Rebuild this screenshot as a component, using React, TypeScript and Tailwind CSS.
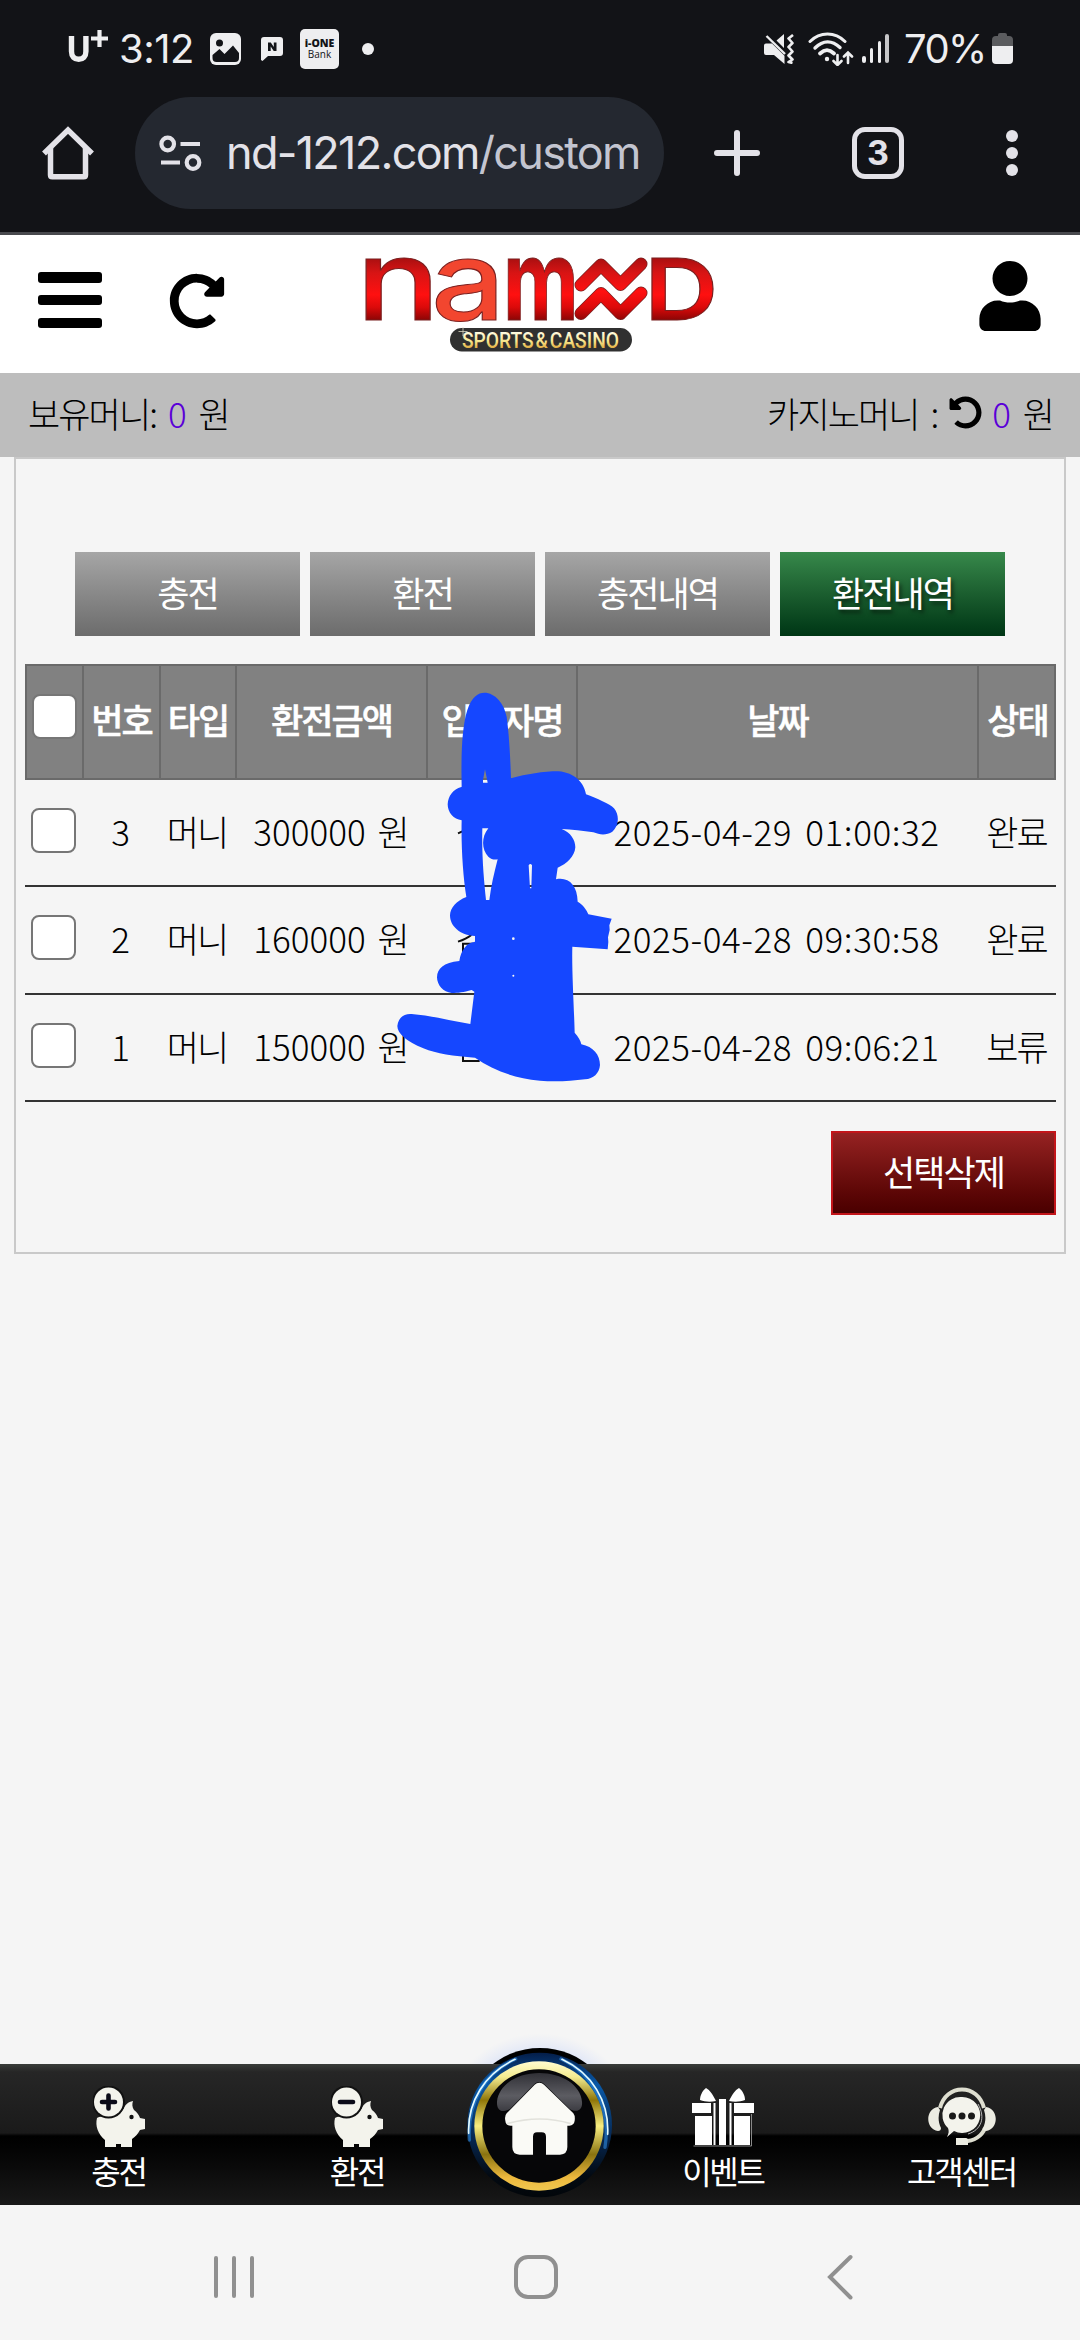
import React from "react";
import { FaRedoAlt, FaUndoAlt, FaUser } from "react-icons/fa";

const tabs = [
  { label: "충전", active: false },
  { label: "환전", active: false },
  { label: "충전내역", active: false },
  { label: "환전내역", active: true },
];

const headers = ["번호", "타입", "환전금액", "입금자명", "날짜", "상태"];

const rows = [
  { no: "3", type: "머니", amount: "300000", date: "2025-04-29 01:00:32", state: "완료", h: "h-[107px]" },
  { no: "2", type: "머니", amount: "160000", date: "2025-04-28 09:30:58", state: "완료", h: "h-[108px]" },
  { no: "1", type: "머니", amount: "150000", date: "2025-04-28 09:06:21", state: "보류", h: "h-[107px]" },
];

const gridCols = "grid grid-cols-[57px_77px_76px_191px_150px_401px_79px]";

function Ko({ children }: { children: React.ReactNode }) {
  return <span className="tracking-[-1.9px] [word-spacing:6px]">{children}</span>;
}

function StatusBar() {
  return (
    <div className="flex h-[97px] items-center pl-[68px] text-[#eeeef0] font-['Inter',sans-serif]">
      <div className="relative h-[34px] w-[51px]">
        <svg width="44" height="36" viewBox="0 0 44 36" className="absolute -top-1 left-0" fill="none" stroke="#eeeef0">
          <path d="M3.500 8v15.500c0 5 3 7.800 7.200 7.800s7.200-2.800 7.200-7.800V8" strokeWidth="5.400" />
          <path d="M31.500 2v17M23 10.500h17" strokeWidth="4.200" />
        </svg>
      </div>
      <span className="w-[91px] text-[40px] leading-none tracking-[-0.5px]">3:12</span>
      <svg width="31" height="32" viewBox="0 0 31 32">
        <rect width="31" height="32" rx="6" fill="#eeeef0" />
        <circle cx="9.500" cy="10" r="3.500" fill="#121317" />
        <path d="M2.500 22l7-6 5 5 8.500-8.500L29 20v5a4 4 0 0 1-4 4H6.500a4 4 0 0 1-4-4z" fill="#121317" />
      </svg>
      <div className="relative ml-5 flex h-[24px] w-[22px]">
        <svg width="22" height="24" viewBox="0 0 22 24">
          <path d="M3 0h16a3 3 0 0 1 3 3v13a3 3 0 0 1-3 3H7l-5.500 5L0 23V3a3 3 0 0 1 3-3z" fill="#eeeef0" />
          <path d="M7 14V5.500h2.800l3 4.500V5.500h2.700V14h-2.800l-3-4.500V14z" fill="#121317" />
        </svg>
      </div>
      <div className="ml-[17px] flex h-10 w-[39px] flex-col items-center justify-center rounded-[5px] bg-[#eeeef0] font-['Open_Sans',sans-serif] text-[#121317]">
        <span className="text-[10.500px] font-extrabold leading-[11px]">i-ONE</span>
        <span className="text-[10px] font-medium leading-[11px]">Bank</span>
      </div>
      <div className="ml-[23px] h-3 w-3 rounded-full bg-[#eeeef0]" />
      <div className="ml-auto flex items-center pr-[67px]">
        <svg width="30" height="30" viewBox="0 0 30 30">
          <path d="M0 11.500Q0 9.500 2 9.500h6L20 29.500 10 21H2q-2 0-2-2z M20 0v14L12.500 6.500z M8 9.500l12.500 12.200V30L10 21z" fill="#eeeef0" />
          <path d="M2.500 2l18.500 18" stroke="#eeeef0" strokeWidth="2.400" />
          <path d="M29 1l-4.500 3.500L28.500 9l-4 4 4 4.500-4 4 4 4-4 2.500 4 1" stroke="#eeeef0" strokeWidth="2.600" fill="none" strokeLinejoin="round" />
        </svg>
        <svg width="46" height="34" viewBox="0 0 46 34" className="ml-[14px]" fill="none" stroke="#eeeef0" strokeLinecap="round">
          <path d="M2 9.500C12-.5 27-.5 37 9.500" strokeWidth="3" />
          <path d="M7 16C15 8 24 8 32 15.500" strokeWidth="3.400" />
          <path d="M12 21.500c5-4.500 9-4.500 14 0" strokeWidth="3.800" />
          <circle cx="19" cy="27" r="2.200" fill="#eeeef0" stroke="none" />
          <path d="M29.500 23v9.500M25.500 29l4 4 4-4M40 31V20.500M36 24.500l4-4 4 4" strokeWidth="2.600" />
        </svg>
        <div className="ml-2 flex h-[29px] w-[27px] items-end justify-between">
          <i className="h-[7px] w-[3.500px] rounded-full bg-[#eeeef0]" />
          <i className="h-[15px] w-[3.500px] rounded-full bg-[#eeeef0]" />
          <i className="h-[22px] w-[3.500px] rounded-full bg-[#eeeef0]" />
          <i className="h-[29px] w-[3.500px] rounded-full bg-[#c6c6c8]" />
        </div>
        <span className="ml-[15px] w-[88px] whitespace-nowrap text-[40px] leading-none tracking-[-1.600px]">70%</span>
        <svg width="21" height="31" viewBox="0 0 21 31">
          <path d="M6 3V2a2 2 0 0 1 2-2h5a2 2 0 0 1 2 2v1h2a4 4 0 0 1 4 4v6H0V7a4 4 0 0 1 4-4z" fill="#5b5c5f" />
          <path d="M0 13h21v14a4 4 0 0 1-4 4H4a4 4 0 0 1-4-4z" fill="#eeeef0" />
        </svg>
      </div>
    </div>
  );
}

function BrowserBar() {
  return (
    <div className="flex h-[135px] items-start pl-[42px]">
      <svg width="52" height="54" viewBox="0 0 52 54" className="mt-[29px]" fill="none" stroke="#e3e2e8" strokeWidth="5.500">
        <path d="M2 27.500L26 4l24 23.500" />
        <path d="M8.500 22v27q0 1.800 1.800 1.800h31.400q1.800 0 1.800-1.800V22" />
      </svg>
      <div className="ml-[41px] flex h-28 w-[529px] items-center rounded-full bg-[#242830] pl-6">
        <svg width="43" height="37" viewBox="0 0 43 37" fill="none" stroke="#e3e2e8" strokeWidth="4.200">
          <circle cx="8.700" cy="9" r="6.300" />
          <path d="M21.500 9H41M2 27.500h19" />
          <circle cx="34" cy="27.500" r="6.300" />
        </svg>
        <span className="ml-[24px] whitespace-nowrap font-['Inter',sans-serif] text-[45px] leading-[56px] tracking-[-1.700px] text-[#e3e2e8]">
          nd-1212.com<span className="text-[#c3c5d0]">/custom</span>
        </span>
      </div>
      <svg width="46" height="46" viewBox="0 0 46 46" className="ml-[50px] mt-[33px]" stroke="#e3e2e8" strokeWidth="6" strokeLinecap="round">
        <path d="M23 3v40M3 23h40" />
      </svg>
      <div className="ml-[92px] mt-[30px] flex h-[52px] w-[52px] items-center justify-center rounded-[13px] border-[5.500px] border-[#e3e2e8] font-['Inter',sans-serif] text-[34px] font-bold leading-none text-[#e3e2e8]">
        3
      </div>
      <div className="ml-[102px] mt-[33px] flex h-[46px] flex-col justify-between">
        <i className="h-3 w-3 rounded-full bg-[#e3e2e8]" />
        <i className="h-3 w-3 rounded-full bg-[#e3e2e8]" />
        <i className="h-3 w-3 rounded-full bg-[#e3e2e8]" />
      </div>
    </div>
  );
}

function Logo() {
  return (
    <svg width="370" height="120" viewBox="0 0 370 120" className="mx-auto overflow-visible">
      <defs>
        <linearGradient id="red" x1="0" y1="12" x2="0" y2="75" gradientUnits="userSpaceOnUse">
          <stop offset="0" stopColor="#a80f10" />
          <stop offset="0.250" stopColor="#d81414" />
          <stop offset="0.550" stopColor="#ff1010" />
          <stop offset="0.800" stopColor="#dc0a0a" />
          <stop offset="1" stopColor="#8f0505" />
        </linearGradient>
        <linearGradient id="redLetter" x1="0" y1="-62" x2="0" y2="0" gradientUnits="userSpaceOnUse">
          <stop offset="0" stopColor="#a80f10" />
          <stop offset="0.250" stopColor="#d81414" />
          <stop offset="0.600" stopColor="#ff1010" />
          <stop offset="0.800" stopColor="#dc0a0a" />
          <stop offset="1" stopColor="#8f0505" />
        </linearGradient>
        <linearGradient id="gold" x1="0" y1="0" x2="0" y2="1">
          <stop offset="0.200" stopColor="#fffbe0" />
          <stop offset="0.550" stopColor="#f7e68c" />
          <stop offset="0.850" stopColor="#e0a83a" />
        </linearGradient>
      </defs>
      <g fontFamily="Inter, sans-serif" fontWeight="500" stroke="#7a2020" strokeWidth="1">
        <text transform="translate(1 74.500) scale(1.250 1)" fontSize="112" fill="url(#redLetter)">n</text>
        <text transform="translate(76 74.500) scale(1.190 1)" fontSize="110" fill="#f2462f">a</text>
        <text transform="translate(148 74.500) scale(0.740 1)" fontSize="112" fontWeight="700" fill="url(#redLetter)">m</text>
        <text transform="translate(289.500 74.500) scale(1.200 1)" fontSize="85" fontWeight="600" fill="url(#redLetter)">D</text>
      </g>
      <g fill="none" strokeLinecap="round" strokeLinejoin="round">
        <path d="M226 40l20-20 19.500 19.500L286 19M226 68.500l20-20 19.500 20L286 48" stroke="#7a2020" strokeWidth="13" />
        <path d="M226 40l20-20 19.500 19.500L286 19M226 68.500l20-20 19.500 20L286 48" stroke="url(#red)" strokeWidth="11.500" />
      </g>
      <rect x="95" y="83" width="182" height="23.500" rx="11.700" fill="#303030" />
      <text x="107" y="102.500" fontFamily="Roboto, sans-serif" fontWeight="500" fontSize="21.500" textLength="157" lengthAdjust="spacingAndGlyphs" fill="url(#gold)">
        SPORTS&#8202;&amp;&#8202;CASINO
      </text>
      <path d="M108 82v9M103.500 86.500h9" stroke="#d8d4c0" strokeWidth="0.800" />
    </svg>
  );
}

function SiteHeader() {
  return (
    <header className="relative flex h-[138px] items-start bg-white">
      <div className="ml-[38px] mt-[37px] flex h-14 w-[64px] flex-col justify-between">
        <i className="h-[10.500px] rounded-[3px] bg-black" />
        <i className="h-[10.500px] rounded-[3px] bg-black" />
        <i className="h-[10.500px] rounded-[3px] bg-black" />
      </div>
      <FaRedoAlt size={56} className="ml-[67px] mt-[38px] text-black" />
      <div className="ml-[130px] mt-[10px]">
        <Logo />
      </div>
      <FaUser className="ml-auto mr-[39px] mt-[26px] h-[70px] w-[62px] text-black" />
    </header>
  );
}

function Balance() {
  return (
    <div className="flex h-[84px] items-center justify-between bg-[#bdbdbd] pb-[6px] pl-[28px] pr-[27px] text-[35px] font-light leading-none text-black">
      <div className="flex whitespace-pre">
        <Ko>보유머니: </Ko>
        <span className="text-[#5a00d8]">0</span>
        <Ko> 원</Ko>
      </div>
      <div className="flex items-center whitespace-pre">
        <Ko>카지노머니 : </Ko>
        <FaUndoAlt size={33} className="mr-[10px]" />
        <span className="text-[#5a00d8]">0</span>
        <Ko> 원</Ko>
      </div>
    </div>
  );
}

function Checkbox() {
  return <span className="h-[45px] w-[45px] rounded-[8px] border-[2.500px] border-[#767676] bg-white" />;
}

function Scribble() {
  return (
    <svg width="300" height="440" viewBox="0 0 900 1320" className="absolute left-[355px] top-[-4px]">
      <path d="M234 520l18-8M303 505v55M234 845q25-8 40-20M249 885v-34h30M388 842l14 6M249 1175v28h50" stroke="#111" strokeWidth="6" fill="none" />
      <path
        fill="#1547ff"
        fillRule="evenodd"
        d="M245 380C243 280 246 200 262 150 275 110 295 98 313 98c32 0 59 32 67 72 8 60 11 130 13 185 47-13 97-21 142-21 50 4 78 36 83 69 32 12 72 29 84 42 20 25 11 55-5 70-17 11-37 10-57 2-30-5-65-9-95-10 27 10 41 33 41 55-2 28-26 50-53 61l-5 35c37-8 64 17 65 67 17 10 27 25 32 38l70 13-7 20 1 14-5 22 1 14-2 22-106-8c-2 70 5 180 7 258 11 12 18 24 20 35 36 7 56 32 56 62-2 25-20 42-45 43-45 6-95 8-135 4-80-7-140-32-195-69-65-5-115-11-155-28-50-20-78-45-78-67 3-28 23-38 43-36 55 4 115 20 176 30l12-97-8-5c-25 7-40 9-60 9-25-2-44-24-44-47 1-27 19-44 67-49 5-31 20-55 47-58v-17c-46-2-75-30-75-62 1-23 19-43 49-55-10-63-16-153-14-230-24-3-42-23-42-48 1-25 16-45 41-52zM315 328l-6 32 0 8h14l-2-10zM307 505c-2 85 5 155 11 215h10c5-40 14-80 25-122-10 2-20 0-28-8-20-20-22-58 0-85zM446 616l4 69h4l2-69q-5-8-10 0zM396 836a4 4 0 1 0 8 0 4 4 0 1 0-8 0zM397 947a3 3 0 1 0 6 0 3 3 0 1 0-6 0z"
      />
    </svg>
  );
}

function HistoryTable() {
  return (
    <div className="relative ml-[9px] mt-7 w-[1031px] text-[35px] leading-none">
      <div
        className={
          gridCols +
          " h-[116px] border-y-2 border-r-2 border-[#6a6a6a] bg-[#818181] font-medium text-white [-webkit-text-stroke:0.5px_white]"
        }
      >
        <div className="flex items-center justify-center border-l-2 border-[#6a6a6a] pb-3">
          <Checkbox />
        </div>
        {headers.map((h) => (
          <div key={h} className="flex items-center justify-center border-l-2 border-[#6a6a6a] pb-2 whitespace-nowrap">
            <Ko>{h}</Ko>
          </div>
        ))}
      </div>
      {rows.map((r) => (
        <div
          key={r.no}
          className={
            gridCols + " items-center justify-items-center border-b-2 border-[#333] pb-[5px] font-light text-black whitespace-nowrap " + r.h
          }
        >
          <Checkbox />
          <span>{r.no}</span>
          <Ko>{r.type}</Ko>
          <span>
            {r.amount}
            <Ko> 원</Ko>
          </span>
          <span />
          <span className="tracking-[0.550px] [word-spacing:5px]">{r.date}</span>
          <Ko>{r.state}</Ko>
        </div>
      ))}
      <Scribble />
    </div>
  );
}

function Pig({ minus = false }: { minus?: boolean }) {
  return (
    <svg width="52" height="62" viewBox="0 0 52 62">
      <path
        d="M4 32C12 28 26 32 31 22c1-3 4-6 9-7-1 3-1 6 1 9 3 2 5 5 6 8l5 1v10l-5 1c-2 4-5 7-8 9v8H28v-3h-5v3H12v-7C5 48 2 40 4 32z"
        fill="#f3f3ec"
      />
      <circle cx="15.500" cy="16" r="16.500" fill="#111" />
      <circle cx="15.500" cy="16" r="14.500" fill="#f3f3ec" />
      <path d={minus ? "M9 16h13" : "M9 16h13M15.500 9.500v13"} stroke="#0a0a18" strokeWidth="4.600" strokeLinecap="round" />
      <circle cx="38.500" cy="31" r="2.200" fill="#111" />
    </svg>
  );
}

function Gift() {
  return (
    <svg width="64" height="62" viewBox="0 0 64 62">
      <g fill="#fff">
        <path d="M25 15c-3-6-6-11-10-13-4 3-6 8-6 12 5 2 11 2 16 1zM38 15c3-6 6-11 10-13 4 3 6 8 6 12-5 2-11 2-16 1z" />
        <path d="M1 17h19v10H1zM43 17h20v10H43zM4 30h17v29H4zM43 30h16v29H43z" />
        <path d="M22.500 17h2v42h-2zM28 13h7v46h-7zM38.500 17h2v42h-2z" />
      </g>
      <path d="M2.500 60h58V28" fill="none" stroke="#888" strokeWidth="1" />
    </svg>
  );
}

function Headset() {
  return (
    <svg width="68" height="62" viewBox="0 0 68 62">
      <path d="M12 22C15 10 24 3.500 34 3.500S53 10 56 22M57 42c-3 8-11 13-21 13.500" fill="none" stroke="#deded0" strokeWidth="4" />
      <path d="M10 21c-13 2-13 22 0 24 2 0 3-1 3-3 -3-6-3-12-1-18zM58 21c13 2 13 22 0 24-2 0-4-1-3-3 3-6 3-12 1-18zM28 52h10q2 0 2 2v5H28z" fill="#ecece2" />
      <path d="M34 11a18 18 0 1 1-8 34l-7 6c2-4 2-6 1-9A18 18 0 0 1 34 11z" fill="#f3f3ec" />
      <path d="M50 18c8 14 3 26-10 30" fill="none" stroke="#ddd" strokeWidth="0.800" />
      <circle cx="24.500" cy="30" r="3.500" fill="#1a1a1a" />
      <circle cx="34" cy="30" r="3.500" fill="#1a1a1a" />
      <circle cx="43.500" cy="30" r="3.500" fill="#1a1a1a" />
    </svg>
  );
}

function HomeButton() {
  return (
    <svg width="220" height="190" viewBox="0 0 660 570" className="absolute left-[430px] top-[-34px]">
      <defs>
        <radialGradient id="glow">
          <stop offset="0.600" stopColor="#7ea4ff" stopOpacity="0.450" />
          <stop offset="1" stopColor="#a9c0ff" stopOpacity="0" />
        </radialGradient>
        <linearGradient id="ring" x1="0" y1="0" x2="0" y2="1">
          <stop offset="0" stopColor="#041d48" />
          <stop offset="0.220" stopColor="#0959a8" />
          <stop offset="0.600" stopColor="#06264f" />
          <stop offset="0.850" stopColor="#030a12" />
          <stop offset="1" stopColor="#02060a" />
        </linearGradient>
        <linearGradient id="goldRing" x1="0" y1="0" x2="0" y2="1">
          <stop offset="0" stopColor="#fffbd0" />
          <stop offset="0.120" stopColor="#f4ec90" />
          <stop offset="0.300" stopColor="#8f7608" />
          <stop offset="0.500" stopColor="#f8ee80" />
          <stop offset="0.720" stopColor="#8a7310" />
          <stop offset="0.900" stopColor="#eeb93e" />
          <stop offset="1" stopColor="#f0c850" />
        </linearGradient>
        <linearGradient id="gloss" x1="0" y1="0" x2="0" y2="1">
          <stop offset="0" stopColor="#303036" />
          <stop offset="0.600" stopColor="#5c5c62" />
          <stop offset="1" stopColor="#3c3c42" />
        </linearGradient>
        <clipPath id="above">
          <rect width="660" height="102" />
        </clipPath>
      </defs>
      <g clipPath="url(#above)">
        <ellipse cx="330" cy="285" rx="290" ry="275" fill="url(#glow)" />
        <circle cx="330" cy="285" r="231" fill="#000" />
      </g>
      <circle cx="329" cy="285" r="217" fill="url(#ring)" />
      <path d="M257 87C160 130 112 220 118 330M393 87c100 45 150 150 132 265" fill="none" stroke="#2f8ae0" strokeWidth="10" strokeLinecap="round" opacity="0.600" />
      <path d="M255 88C165 130 112 215 116 310M396 88c90 42 142 125 137 225" fill="none" stroke="#e4fbff" strokeWidth="5" strokeLinecap="round" />
      <circle cx="327" cy="288" r="194" fill="url(#goldRing)" />
      <circle cx="327" cy="288" r="170" fill="#060608" />
      <path d="M201 215C206 165 260 129 328 129s124 36 128 86c2 20-8 30-24 27-60-22-148-20-206 0-17 4-26-7-25-27z" fill="url(#gloss)" />
      <path
        d="M328 158q8 0 14 6l88 86q6 8 4 22-2 14-16 15h-6v64q0 22-22 23h-42v-54q0-13-13-13h-14q-12 0-12 13v54h-40q-22-1-22-23v-64h-5q-15-1-16-15-3-14 4-22l84-86q6-6 14-6z"
        fill="#fafaf6"
        stroke="#0b0b0d"
        strokeWidth="4"
        paintOrder="stroke"
      />
      <path d="M232 281q98-28 190 0" fill="none" stroke="#e2e2dc" strokeWidth="5" />
    </svg>
  );
}

const items = [
  { label: "충전", icon: <Pig />, w: "w-[237px]" },
  { label: "환전", icon: <Pig minus />, w: "w-[240px]" },
  { label: "이벤트", icon: <Gift />, w: "ml-[126px] w-[240px]" },
  { label: "고객센터", icon: <Headset />, w: "w-[237px]" },
];

function BottomNav() {
  return (
    <nav className="relative flex h-[141px] bg-[linear-gradient(#3a3c3a_0px,#262626_8px,#1a1a1a_69px,#000_72px,#050505_90px,#191919_141px)]">
      <HomeButton />
      {items.map((it) => (
        <div key={it.label} className={"flex flex-col items-center pt-[22px] text-[32px] leading-none text-white " + it.w}>
          {it.icon}
          <span className="mt-[6px] font-normal tracking-[-2.200px]">{it.label}</span>
        </div>
      ))}
    </nav>
  );
}

function SystemNav() {
  return (
    <div className="flex flex-1 items-start pl-[214px] pt-[51px]">
      <div className="flex h-[42px] w-10 justify-between">
        <i className="w-1 rounded-full bg-[#909090]" />
        <i className="w-1 rounded-full bg-[#909090]" />
        <i className="w-1 rounded-full bg-[#909090]" />
      </div>
      <div className="-mt-px ml-[260px] h-[44px] w-[44px] rounded-[14px] border-4 border-[#909090]" />
      <svg width="28" height="46" viewBox="0 0 28 46" className="-mt-[2px] ml-[268px]" fill="none" stroke="#909090" strokeWidth="4" strokeLinecap="round">
        <path d="M24.500 3L4 23l20.500 20.500" />
      </svg>
    </div>
  );
}

export default function App() {
  return (
    <div className="flex h-[2340px] w-[1080px] flex-col overflow-hidden bg-[#f5f5f5] font-['Noto_Sans_CJK_KR',sans-serif]">
      <div className="h-[235px] border-b-[3px] border-[#48494e] bg-[#121317]">
        <StatusBar />
        <BrowserBar />
      </div>
      <SiteHeader />
      <Balance />
      <main className="ml-[14px] h-[797px] w-[1052px] border-2 border-[#c9c9c9]">
        <div className="mt-[93px] flex justify-center gap-[10px] text-[35px] leading-none text-white">
          {tabs.map((t) => (
            <button
              key={t.label}
              className={
                t.active
                  ? "flex h-[84px] w-[225px] items-center justify-center bg-gradient-to-b from-[#37894b] to-[#003615] pb-[5px] text-shadow-[2px_3px_4px_rgba(0,0,0,0.6)]"
                  : "flex h-[84px] w-[225px] items-center justify-center bg-gradient-to-b from-[#a6a6a6] to-[#6c6c6c] pb-[5px]"
              }
            >
              <Ko>{t.label}</Ko>
            </button>
          ))}
        </div>
        <HistoryTable />
        <button className="ml-[815px] mt-[29px] flex h-[84px] w-[225px] items-center justify-center border-2 border-[#c3151a] bg-gradient-to-b from-[#962222] to-[#4a0000] pb-[5px] text-[35px] leading-none text-white">
          <Ko>선택삭제</Ko>
        </button>
      </main>
      <div className="h-[810px]" />
      <BottomNav />
      <SystemNav />
    </div>
  );
}
